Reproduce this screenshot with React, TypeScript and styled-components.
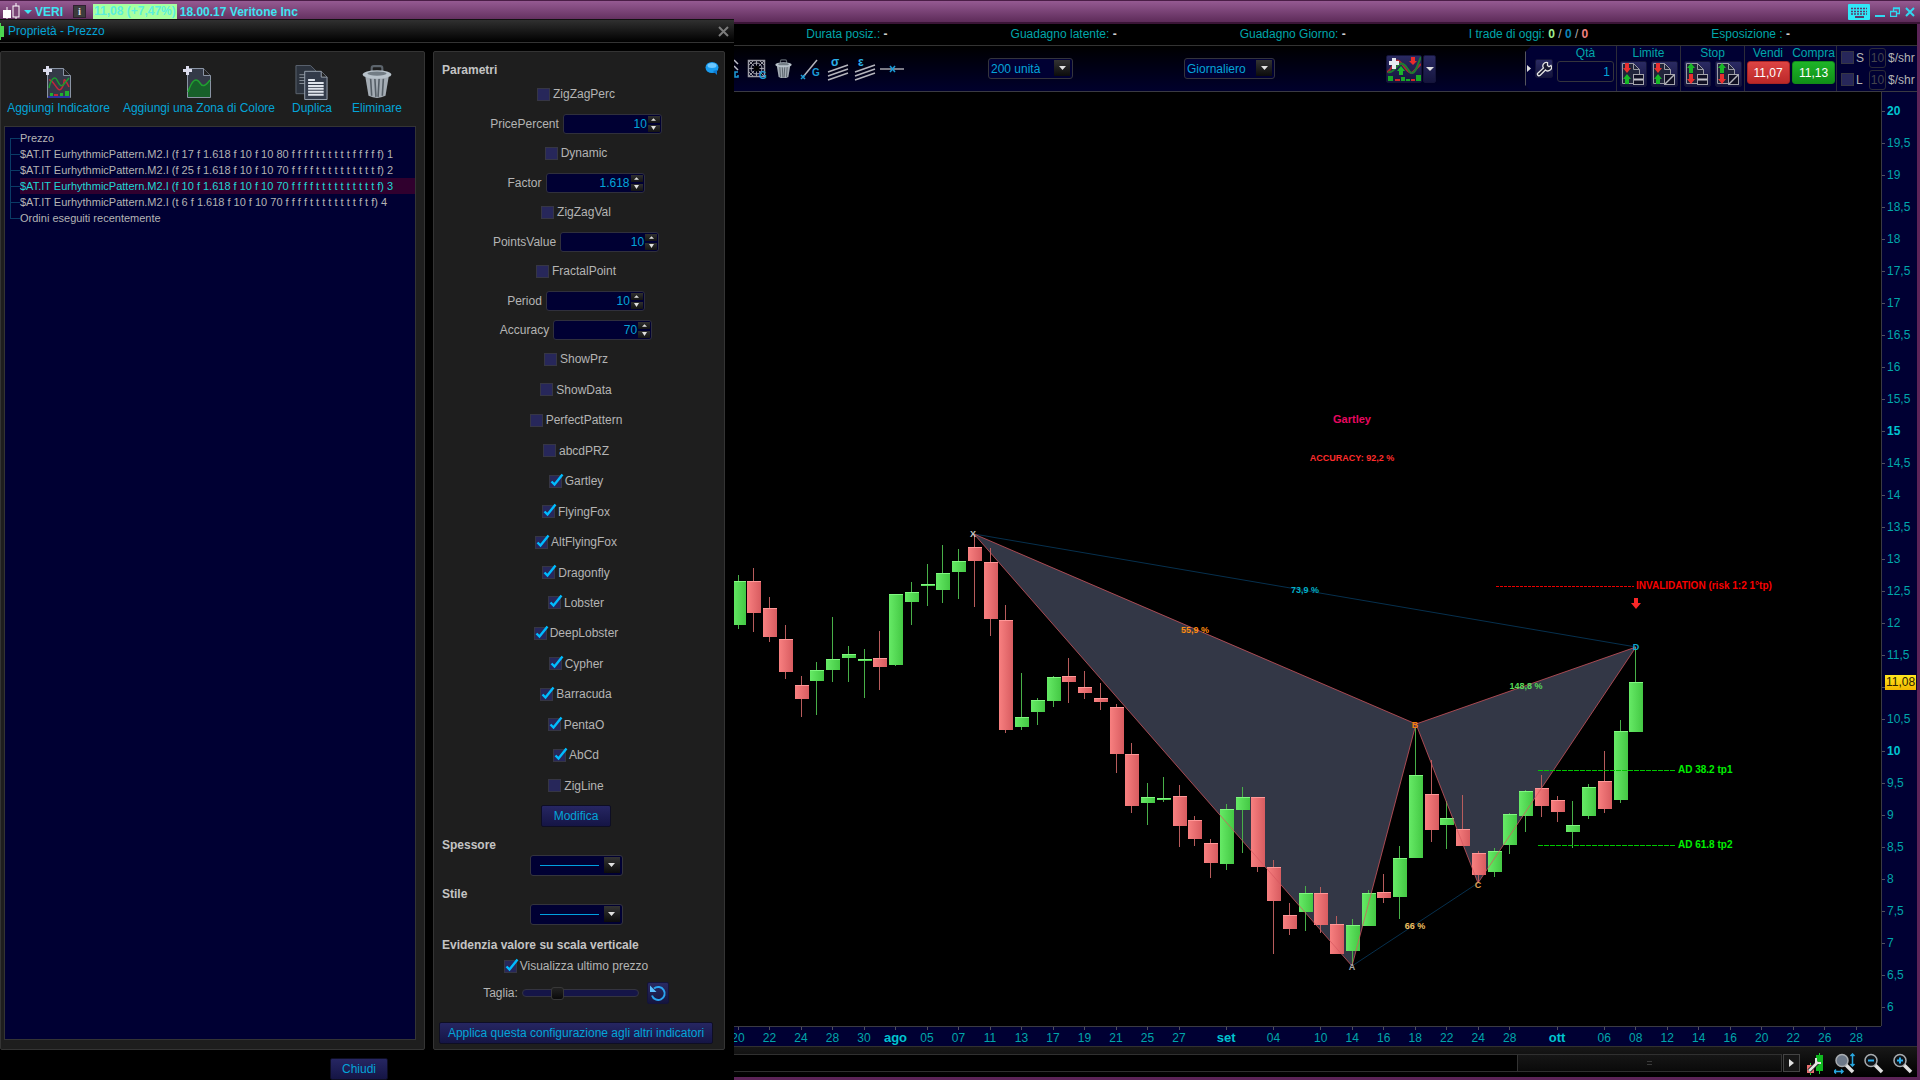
import React, { useId, useState } from "react";
import styled, { createGlobalStyle, css } from "styled-components";

const cyan = "#04a4d8";
const teal = "#00a6aa";
const navy = "#000033";
const grey = "#b4b4b4";

const GlobalStyle = createGlobalStyle`
  *, *::before, *::after { box-sizing: border-box; }
  html, body, #root { height: 100%; }
  body {
    margin: 0;
    background: #000;
    overflow: hidden;
    font-family: "Liberation Sans", Arial, sans-serif;
    font-size: 12px;
    line-height: 16px;
  }
  button, input, select { font: inherit; margin: 0; }
  h2, ul { margin: 0; padding: 0; }
  svg { display: block; }
`;

const Window = styled.div`
  position: relative;
  display: flex;
  flex-direction: column;
  height: 100vh;
  background: #000;
  border: solid #5c2458;
  border-width: 0 3px 3px 0;
`;

/* ---------- window title ---------- */

const TitleBar = styled.header`
  display: flex;
  align-items: center;
  flex: none;
  height: 24px;
  margin-right: -3px;
  padding: 0 5px 0 3px;
  border-top: 1px solid #4a1d46;
  border-bottom: 2px solid #3a1436;
  background: linear-gradient(#955a92, #5d2b59);
  color: #3fe4f2;
  font-weight: bold;
`;

const Ticker = styled.button`
  display: flex;
  align-items: center;
  gap: 3px;
  padding: 0;
  border: 0;
  background: none;
  color: inherit;
  font-weight: bold;
`;

const InfoButton = styled.button`
  width: 13px;
  height: 13px;
  margin: 0 7px 0 10px;
  padding: 0;
  border: 1px solid #302030;
  background: #3c3c3c;
  color: #ddd;
  font: bold 11px/11px "Liberation Serif", serif;
`;

const Change = styled.span`
  padding: 0 1px;
  margin-right: 3px;
  line-height: 15px;
  background: #a8ffa0;
  color: #5cf0dc;
`;

const WindowButtons = styled.div`
  display: flex;
  align-items: center;
  gap: 5px;
  margin-left: auto;
`;

const PlainButton = styled.button`
  display: flex;
  padding: 0;
  border: 0;
  background: none;
`;

/* ---------- trading workspace ---------- */

const Workspace = styled.main`
  display: flex;
  flex-direction: column;
  flex: 1;
  min-height: 0;
  margin-left: 734px;
`;

const Stats = styled.div`
  display: flex;
  align-items: center;
  justify-content: flex-end;
  gap: 123px;
  flex: none;
  height: 22px;
  padding: 0 127px 2px 0;
  border-bottom: 1px solid #333;
  color: ${teal};
  white-space: nowrap;
`;

const Value = styled.b<{ $color?: string }>`
  color: ${(p) => p.$color ?? "#d0d0d0"};
`;

const Slash = styled.span`
  color: #b0b0b0;
`;

const Toolbar = styled.div`
  display: flex;
  align-items: center;
  flex: none;
  height: 46px;
  border-bottom: 1px solid #3a3a42;
  background: linear-gradient(#000, #00002c);
`;

const ToolButton = styled.button<{ $cut?: boolean }>`
  display: flex;
  align-items: center;
  justify-content: center;
  width: ${(p) => (p.$cut ? 9 : 27)}px;
  height: 30px;
  padding: 0;
  border: 0;
  background: none;
  ${(p) => p.$cut && css`justify-content: flex-start;`}
`;

const SelectBox = styled.div<{ $width: number; $left?: number }>`
  position: relative;
  flex: none;
  width: ${(p) => p.$width}px;
  height: 21px;
  margin-left: ${(p) => p.$left ?? 0}px;
  border: 1px solid #34343c;
  border-radius: 3px;
  background: ${navy};
  select {
    display: block;
    appearance: none;
    width: 100%;
    height: 19px;
    padding: 0 18px 0 2px;
    border: 0;
    background: none;
    color: ${cyan};
  }
`;

const SelectArrow = styled.span`
  position: absolute;
  top: 1px;
  right: 2px;
  display: flex;
  align-items: center;
  justify-content: center;
  width: 16px;
  height: 16px;
  background: linear-gradient(#333, #0c0c0c);
  pointer-events: none;
`;

const SelectLine = styled.span`
  position: absolute;
  top: 9px;
  left: 9px;
  width: 59px;
  height: 1px;
  background: #00a0e0;
  pointer-events: none;
`;

const SplitButton = styled.div`
  display: flex;
  gap: 1px;
  margin-left: 111px;
`;

const Raised = styled.button<{ $w: number; $h: number }>`
  display: flex;
  align-items: center;
  justify-content: center;
  flex: none;
  width: ${(p) => p.$w}px;
  height: ${(p) => p.$h}px;
  padding: 0;
  border: 1px solid #14143a;
  border-radius: 2px;
  background: linear-gradient(#2a2a62, #15153e);
`;

const TradePanel = styled.div`
  display: flex;
  align-items: stretch;
  width: 392px;
  height: 45px;
  margin-left: auto;
  line-height: 14px;
  color: ${teal};
  background: ${navy};
  clip-path: polygon(6px 0, 100% 0, 100% 100%, 6px 100%, 0 39px, 0 6px);
`;

const TradeCell = styled.div<{ $w: number; $line?: boolean }>`
  display: flex;
  flex-direction: column;
  align-items: center;
  gap: 1px;
  flex: none;
  width: ${(p) => p.$w}px;
  border-right: ${(p) => (p.$line ? "1px solid #2c2c38" : "0")};
`;

const TradeSide = styled.div`
  display: flex;
  align-items: center;
  justify-content: space-between;
  width: 30px;
  padding: 0 2px 0 1px;
  border-left: 1px solid #55555c;
`;

const ButtonRow = styled.div`
  display: flex;
  gap: 4px;
`;

const QtyInput = styled.input`
  width: 57px;
  height: 21px;
  padding: 0 3px;
  border: 1px solid #34343c;
  border-radius: 3px;
  background: ${navy};
  color: ${cyan};
  text-align: right;
`;

const OrderButton = styled.button<{ $buy?: boolean }>`
  width: 43px;
  height: 23px;
  padding: 0;
  border: 1px solid ${(p) => (p.$buy ? "#128a18" : "#a82424")};
  border-radius: 3px;
  background: ${(p) =>
    p.$buy ? "linear-gradient(#1eb428, #109018)" : "linear-gradient(#dc4444, #bc2828)"};
  color: #fff;
`;

const Stops = styled.div`
  display: flex;
  flex-direction: column;
  justify-content: center;
  gap: 2px;
  padding-left: 4px;
`;

const StopLine = styled.label`
  display: grid;
  grid-template-columns: 13px 15px 17px auto;
  align-items: center;
  height: 20px;
  color: ${grey};
  white-space: nowrap;
  span { padding-left: 2px; }
`;

const StopInput = styled.input`
  width: 17px;
  height: 20px;
  padding: 0;
  border: 1px solid #2c2c38;
  border-radius: 3px;
  background: ${navy};
  color: #44444c;
  text-align: center;
`;

/* ---------- chart ---------- */

const ChartRow = styled.div`
  display: flex;
  flex: 1;
  min-height: 0;
`;

const ChartSvg = styled.svg`
  flex: 1;
  min-width: 0;
  height: 100%;
`;

const PriceAxis = styled.div`
  position: relative;
  display: flex;
  flex-direction: column;
  flex: none;
  width: 36px;
  padding: 3px 0;
  border-left: 1px solid #3a3a42;
  background: ${navy};
  color: ${teal};
`;

const PriceTick = styled.div<{ $major: boolean }>`
  display: flex;
  align-items: center;
  flex: 1;
  gap: 2px;
  font-weight: ${(p) => (p.$major ? "bold" : "normal")};
  color: ${(p) => (p.$major ? "#00c4d0" : teal)};
  &::before {
    content: "";
    width: 3px;
    height: 1px;
    background: #505060;
  }
`;

const LastPrice = styled.div`
  position: absolute;
  right: 1px;
  top: calc(63% - 5px);
  width: 31px;
  height: 15px;
  line-height: 15px;
  background: linear-gradient(#ffe620, #f2b800);
  color: #2a2200;
  text-align: center;
`;

const TimeAxis = styled.svg`
  flex: none;
  width: 100%;
  height: 20px;
  background: ${navy};
`;

const Footer = styled.div`
  display: flex;
  align-items: center;
  flex: none;
  height: 31px;
  padding-right: 4px;
  border-top: 1px solid #303030;
  background: linear-gradient(#181818, #000);
`;

const Track = styled.div`
  display: flex;
  justify-content: flex-end;
  flex: 1;
  height: 18px;
  margin-top: 2px;
  border: solid #303030;
  border-width: 1px 0;
  background: #000;
`;

const Thumb = styled.div`
  display: flex;
  align-items: center;
  justify-content: center;
  width: 265px;
  border: solid #333;
  border-width: 0 1px;
  background: linear-gradient(#161616, #0a0a0a);
`;

const Grip = styled.span`
  width: 5px;
  height: 4px;
  border: solid #3a3a3a;
  border-width: 1px 0;
`;

const NextButton = styled.button`
  display: flex;
  align-items: center;
  justify-content: center;
  width: 17px;
  height: 18px;
  margin: 2px 0 0 1px;
  padding: 0;
  border: 1px solid #444;
  background: #161616;
`;

const Zooms = styled.div`
  display: flex;
  gap: 8px;
  margin: 3px 0 0 6px;
`;

/* ---------- properties dialog ---------- */

const Dialog = styled.section`
  position: absolute;
  top: 19px;
  left: 0;
  bottom: -3px;
  display: flex;
  flex-direction: column;
  width: 734px;
  background: #000;
  color: ${grey};
`;

const DialogTitle = styled.div`
  display: flex;
  align-items: center;
  flex: none;
  height: 24px;
  padding-right: 5px;
  border-top: 1px solid #111;
  border-bottom: 1px solid #333;
  background: linear-gradient(#303030, #000);
  color: ${cyan};
  h2 { flex: 1; padding-left: 4px; font-size: 12px; font-weight: normal; }
`;

const Panels = styled.div`
  display: flex;
  gap: 8px;
  flex: 1;
  min-height: 0;
  margin-top: 8px;
`;

const Panel = styled.div<{ $width: number }>`
  display: flex;
  flex-direction: column;
  width: ${(p) => p.$width}px;
  border: 1px solid #343434;
  border-radius: 2px;
  background: #1e1e1e;
`;

const Actions = styled.div`
  display: flex;
  height: 74px;
  flex: none;
`;

const Action = styled.button<{ $w: number }>`
  display: flex;
  flex-direction: column;
  align-items: center;
  justify-content: space-between;
  position: relative;
  width: ${(p) => p.$w}px;
  height: 51px;
  margin-top: 13px;
  padding: 0;
  border: 0;
  background: none;
  color: ${cyan};
  white-space: nowrap;
  & + &::before {
    content: "";
    position: absolute;
    left: 0;
    top: 1px;
    width: 2px;
    height: 34px;
    border-left: 1px solid #0c0c0c;
    background: #303030;
  }
`;

const Tree = styled.ul`
  flex: 1;
  margin: 0 8px 9px 3px;
  padding: 3px 0 0 5px;
  border: 1px solid #343434;
  background: ${navy};
  list-style: none;
  overflow: hidden;
`;

const TreeItem = styled.li<{ $selected: boolean }>`
  display: flex;
  height: 16px;
  font-size: 11px;
  white-space: nowrap;
  color: ${(p) => (p.$selected ? "#1fd6d6" : grey)};
  &::before {
    content: "";
    width: 10px;
    height: 16px;
    background:
      linear-gradient(#0a3c66, #0a3c66) 0 8px / 10px 1px no-repeat,
      linear-gradient(#0a3c66, #0a3c66) 0 0 / 1px 16px no-repeat;
  }
  &:first-child::before { background-position: 0 8px, 0 8px; }
  &:last-child::before { background-size: 10px 1px, 1px 8px; }
  span {
    flex: 1;
    background: ${(p) => (p.$selected ? "#30002e" : "none")};
  }
`;

const ParamHead = styled.div`
  display: flex;
  justify-content: space-between;
  height: 27px;
  flex: none;
  padding: 10px 5px 0 0;
`;

const Heading = styled.h2<{ $top?: number }>`
  flex: none;
  margin-top: ${(p) => p.$top ?? 0}px;
  padding-left: 8px;
  font-size: 12px;
  line-height: 16px;
  font-weight: bold;
  color: #c4c4c4;
`;

const Row = styled.div<{ $h?: number; $top?: number }>`
  display: flex;
  align-items: center;
  justify-content: center;
  gap: 4px;
  flex: ${(p) => (p.$h ? "none" : "1")};
  height: ${(p) => (p.$h ? `${p.$h}px` : "auto")};
  margin-top: ${(p) => p.$top ?? 0}px;
  padding-right: 6px;
`;

const CheckList = styled.div`
  display: flex;
  flex-direction: column;
  flex: 1;
  min-height: 0;
`;

const CheckLabel = styled.label`
  display: flex;
  align-items: center;
  gap: 3px;
`;

const CheckBox = styled.span`
  position: relative;
  display: block;
  width: 13px;
  height: 13px;
  svg { position: absolute; top: -2px; left: 1px; pointer-events: none; }
  input:not(:checked) + svg { display: none; }
`;

const CheckInput = styled.input`
  display: block;
  appearance: none;
  width: 13px;
  height: 13px;
  border: 1px solid #363644;
  background: #27275a;
`;

const SpinBox = styled.div`
  display: flex;
  align-items: center;
  width: 99px;
  height: 20px;
  border: 1px solid #30303c;
  border-radius: 3px;
  background: ${navy};
  input {
    flex: 1;
    min-width: 0;
    padding: 0 1px 0 4px;
    border: 0;
    background: none;
    color: ${cyan};
    text-align: right;
  }
`;

const Spinners = styled.div`
  display: grid;
  gap: 2px;
  margin-right: 1px;
`;

const SpinButton = styled.button`
  display: flex;
  align-items: center;
  justify-content: center;
  width: 12px;
  height: 7px;
  padding: 0;
  border: 0;
  background: linear-gradient(#303030, #141414);
`;

const TextButton = styled.button<{ $w: number }>`
  flex: none;
  width: ${(p) => p.$w}px;
  height: 22px;
  padding: 0;
  border: 1px solid #0e0e24;
  border-radius: 2px;
  background: linear-gradient(#262662, #151545);
  color: ${cyan};
  white-space: nowrap;
`;

const Range = styled.input`
  appearance: none;
  width: 117px;
  height: 14px;
  background: none;
  &::-webkit-slider-runnable-track {
    height: 8px;
    border: 1px solid #343440;
    border-radius: 4px;
    background: #151548;
  }
  &::-webkit-slider-thumb {
    appearance: none;
    width: 13px;
    height: 13px;
    margin-top: -3px;
    border: 1px solid #383838;
    border-radius: 3px;
    background: linear-gradient(#222, #0a0a0a);
  }
`;

const Apply = styled.div`
  padding: 18px 0 5px 5px;
`;

const DialogFooter = styled.div`
  display: flex;
  justify-content: center;
  flex: none;
  height: 30px;
  padding: 8px 16px 0 0;
`;

/* ---------- icons ---------- */

const Down = ({ size = 7, color = "#e0e0e0" }: { size?: number; color?: string }) => (
  <svg width={size} height={4} viewBox="0 0 8 4" preserveAspectRatio="none">
    <path d="M0 0h8L4 4z" fill={color} />
  </svg>
);

const Up = () => (
  <svg width="5" height="3" viewBox="0 0 8 4">
    <path d="M0 4h8L4 0z" fill="#e0e0e0" />
  </svg>
);

const CandlesIcon = () => (
  <svg width="18" height="17" viewBox="0 0 18 17">
    <path d="M4 4v12M13 0v17" stroke="#fff" />
    <rect x="0" y="7" width="8" height="8" fill="#fff" />
    <rect x="10" y="3" width="6" height="11" fill="#7a4676" stroke="#fff" />
  </svg>
);

const PageBase = ({ children }: { children: React.ReactNode }) => (
  <svg width="34" height="34" viewBox="0 0 34 34">
    <path d="M5.500 3.500h16l7 7v22h-23z" fill="#343a48" stroke="#8a94a4" />
    <path d="M21.500 3.500v7h7" fill="#222" stroke="#8a94a4" />
    {children}
    <path d="M4 1h3v3h3v3H7v3H4V7H1V4h3z" fill="#dcdcec" />
  </svg>
);

const AddIndicatorIcon = () => (
  <PageBase>
    <path d="M7 15c3-1 6 6 9 9s6-4 6-8 3 2 5 6" fill="none" stroke="#c22838" strokeWidth="1.500" />
    <path d="M7 23c2-10 6-12 8-8s4 8 7 4l5-6" fill="none" stroke="#1c9c30" strokeWidth="1.500" />
    <path d="M8 28h3v3H8zM18 28h3v3h-3zM23 26h4v5h-4z" fill="#20b030" />
    <path d="M12 29h4v2h-4z" fill="#c22838" />
    <path d="M6 32h22" stroke="#2c34a0" strokeWidth="2" />
  </PageBase>
);

const AddZoneIcon = () => (
  <PageBase>
    <path d="M6 27c4-12 8-15 12-9 3 5 6 2 10-3v17H6z" fill="#17602a" />
    <path d="M6 27c4-12 8-15 12-9 3 5 6 2 10-3" fill="none" stroke="#20a030" strokeWidth="1.500" />
  </PageBase>
);

const DuplicateIcon = () => (
  <svg width="34" height="36" viewBox="0 0 34 36">
    <path d="M.5.500h15l6 6v23h-21z" fill="#2c333e" stroke="#5c6470" />
    <path d="M4 10h6M4 13h6M4 16h6M4 19h6" stroke="#8a929c" />
    <path d="M9.500 6.500h17l6 6v23h-23z" fill="#333b4a" stroke="#98a2b0" />
    <path d="M26.500 6.500v6h6" fill="#222" stroke="#98a2b0" />
    <path d="M13 15.500h7M13 18.500h16M13 21.500h16M13 24.500h16M13 27.500h16M13 30.500h16" stroke="#dfe4ec" strokeWidth="2" />
  </svg>
);

const TrashIcon = ({ width, height }: { width: number; height: number }) => (
  <svg width={width} height={height} viewBox="0 0 28 32">
    <path d="M9 7V3q0-2 2-2h6q2 0 2 2v4" fill="none" stroke="#5c646c" strokeWidth="2" />
    <path d="M3 11h22l-3 18q-8 4-16 0z" fill="#a4acb4" />
    <path d="M8 13l1 16M12 13l1 17M16 13l-1 17M20 13l-1 16" stroke="#555e66" strokeWidth="1.500" />
    <ellipse cx="14" cy="9" rx="13.500" ry="4" fill="#b8c2ca" />
    <ellipse cx="14" cy="8" rx="9" ry="2" fill="#727c84" />
  </svg>
);

const CheckMark = () => (
  <svg width="14" height="14" viewBox="0 0 14 14">
    <path d="M1.500 8.500L4.500 11.500L12.500 1.500" fill="none" stroke="#00bcff" strokeWidth="2.400" />
  </svg>
);

const BubbleIcon = () => (
  <svg width="14" height="13" viewBox="0 0 14 13">
    <ellipse cx="7" cy="5.500" rx="6.500" ry="5.500" fill="#189cf0" />
    <path d="M8 9l4 4V8z" fill="#0c78d0" />
    <ellipse cx="7" cy="3.500" rx="4.500" ry="2.500" fill="#6cc8ff" />
  </svg>
);

const ResetIcon = () => (
  <svg width="18" height="18" viewBox="0 0 18 18">
    <path d="M5 4.500A6.500 6.500 0 1 1 3 11.500" fill="none" stroke="#2aa4f0" strokeWidth="2" />
    <path d="M1 1.500v6.500h6.500z" fill="#5cc0ff" />
  </svg>
);

const GannIcon = () => (
  <svg width="20" height="22" viewBox="0 0 20 22">
    <rect x="1.500" y="2.500" width="16" height="16" fill="none" stroke="#9a9aa4" strokeWidth="1.500" />
    <path d="M2 3l15 15M17 3L2 18M9.500 3v15M2 10.500h15M2 7l4-4M13 3l4 4M2 14l4 4" stroke="#9a9aa4" />
    <circle cx="9.500" cy="10.500" r="5.500" fill="none" stroke="#b4b4bc" />
    <circle cx="9.500" cy="10.500" r="3" fill="#000" />
    <text x="12" y="21" fontSize="10" fontWeight="bold" fill="#1c9cd8">G</text>
  </svg>
);

const CutIcon = () => (
  <svg width="5" height="20" viewBox="0 0 5 20">
    <path d="M0 1l4 4M0 7l4 4" stroke="#c0c0c8" strokeWidth="1.500" />
    <path d="M4 13H1v5h3v-2" stroke="#1c9cd8" strokeWidth="1.500" fill="none" />
  </svg>
);

const SegmentIcon = () => (
  <svg width="22" height="22" viewBox="0 0 22 22">
    <path d="M3 19L17 2" stroke="#b4b4bc" strokeWidth="1.500" />
    <path d="M1 17l4 4M5 17l-4 4" stroke="#1c9cd8" strokeWidth="1.500" />
    <text x="12" y="18" fontSize="10" fontWeight="bold" fill="#1c9cd8">G</text>
  </svg>
);

const BandsIcon = ({ glyph }: { glyph: string }) => (
  <svg width="22" height="28" viewBox="0 0 22 28">
    <path d="M1 17l20-7M1 21l20-7M1 25l20-7" stroke="#b4b4bc" strokeWidth="1.500" />
    <text x="4" y="11" fontSize="12" fontWeight="bold" fill="#2cb0e8">{glyph}</text>
  </svg>
);

const HLineIcon = () => (
  <svg width="24" height="8" viewBox="0 0 24 8">
    <path d="M0 4h24" stroke="#a4a4ac" strokeWidth="1.500" />
    <path d="M10 1l5 6M15 1l-5 6" stroke="#1c9cd8" strokeWidth="1.500" />
  </svg>
);

const IndicatorsIcon = () => (
  <svg width="34" height="26" viewBox="0 0 34 26">
    <path d="M0 16c6-2 7-14 12-11s7 12 13 12l9-9" fill="none" stroke="#b02430" strokeWidth="2" />
    <path d="M1 16c7 2 9-11 15-8s5 9 9 9 6-10 9-16" fill="none" stroke="#1c7c30" strokeWidth="2" />
    <path d="M14 10l-4 5h2v4h4v-4h2z" fill="#1cb42c" />
    <path d="M24 1h4v4h2l-4 4-4-4h2z" fill="#e82c2c" />
    <path d="M1 20h5v5H1zM14 21h4v4h-4zM19 23h4v2h-4zM29 19h5v6h-5z" fill="#18a828" />
    <path d="M8 23h5v2H8zM24 23h4v2h-4z" fill="#d02828" />
    <path d="M5 2h4v3h3v4H9v4H5V9H2V5h3z" fill="#e8e8f0" />
  </svg>
);

const WrenchIcon = () => (
  <svg width="16" height="16" viewBox="0 0 16 16">
    <path
      d="M1.500 12.500l6-5.500a3.600 3.600 0 0 1 4-5.500v3l1.500 1.200 2-1.200a3.600 3.600 0 0 1-5.500 4.500l-5.500 5.500a1.700 1.700 0 0 1-2.500-2z"
      fill="#181830"
      stroke="#e4e4e4"
      strokeWidth="1.300"
    />
  </svg>
);

const OrderIcon = ({ stop, slash }: { stop?: boolean; slash?: boolean }) => {
  const top = stop ? "#18b828" : "#e83030";
  const bottom = stop ? "#e83030" : "#18b828";
  return (
    <svg width="24" height="24" viewBox="0 0 24 24">
      <path d="M1.500 1.500h11l6 6v14h-17z" fill="#20243a" stroke="#9a9aa4" />
      <path d="M12.500 1.500v6h6" fill="none" stroke="#9a9aa4" />
      <path
        d={stop ? "M6 1L2 6h2v5h4V6h2z" : "M4 1h4v5h2l-4 5-4-5h2z"}
        fill={top}
      />
      <path
        d={stop ? "M4 12h4v5h2l-4 5-4-5h2z" : "M6 12l-4 5h2v5h4v-5h2z"}
        fill={bottom}
      />
      <rect x="12.500" y="12.500" width="10" height="10" fill="#101024" stroke="#a4a4ac" />
      {slash ? (
        <path d="M13 22l9-9" stroke="#b4b4bc" strokeWidth="1.500" />
      ) : (
        <path d="M13 17.500h9" stroke="#c4c4cc" strokeWidth="2" />
      )}
    </svg>
  );
};

const Lens = ({ children, fill = "#101418" }: { children?: React.ReactNode; fill?: string }) => (
  <svg width="21" height="21" viewBox="0 0 21 21">
    <path d="M12 12l7 7" stroke="#e0e0e0" strokeWidth="3.500" />
    <circle cx="8" cy="7.500" r="6" fill={fill} stroke="#a8acb0" strokeWidth="1.500" />
    {children}
  </svg>
);

const ChartToolIcon = () => (
  <svg width="20" height="22" viewBox="0 0 20 22">
    <path d="M13.500 0v21M4.500 10v12" stroke="#20d030" />
    <rect x="10" y="2" width="7" height="16" fill="#10b820" />
    <rect x="1" y="12" width="7" height="8" fill="#e87070" />
    <path d="M3 18L12 9" stroke="#222" strokeWidth="4.500" />
    <path d="M3 18L12 9" stroke="#e4e4e4" strokeWidth="2.500" />
    <path d="M10 5v5h5" fill="none" stroke="#e4e4e4" strokeWidth="2" />
  </svg>
);

/* ---------- chart data ---------- */

const STEP = 15.75;
const FIRST = 738;
const candleX = (i: number) => FIRST + i * STEP;

/* direction, high, body top, body bottom, low */
const candles: [string, number, number, number, number][] = [
  ["u", 575, 581, 625, 629], ["d", 568, 581, 613, 632], ["d", 597, 608, 637, 642], ["d", 625, 639, 672, 679],
  ["d", 676, 685, 699, 717], ["u", 662, 670, 681, 715], ["u", 617, 659, 670, 682], ["u", 646, 654, 658, 682],
  ["u", 649, 659, 661, 698], ["d", 631, 658, 667, 690], ["u", 594, 594, 665, 666], ["u", 582, 592, 602, 625],
  ["u", 564, 584, 586, 606], ["u", 545, 573, 590, 603], ["u", 549, 561, 572, 599], ["d", 534, 547, 561, 607],
  ["d", 548, 562, 619, 636], ["d", 605, 620, 730, 733], ["u", 673, 717, 727, 730], ["u", 698, 700, 712, 725],
  ["u", 676, 677, 701, 707], ["d", 658, 676, 682, 703], ["d", 671, 687, 693, 699], ["d", 683, 698, 702, 710],
  ["d", 704, 707, 754, 773], ["d", 743, 754, 806, 813], ["u", 783, 797, 803, 825], ["u", 777, 798, 800, 802],
  ["d", 785, 796, 826, 847], ["d", 816, 820, 839, 846], ["d", 839, 843, 863, 878], ["u", 804, 809, 864, 870],
  ["u", 787, 797, 810, 853], ["d", 797, 797, 867, 872], ["d", 860, 867, 901, 954], ["d", 903, 915, 929, 935],
  ["u", 886, 893, 912, 931], ["d", 887, 893, 925, 933], ["d", 916, 924, 954, 954], ["u", 919, 925, 951, 966],
  ["u", 890, 893, 926, 926], ["d", 874, 892, 898, 903], ["u", 846, 858, 897, 919], ["u", 727, 775, 858, 858],
  ["d", 760, 794, 830, 842], ["u", 801, 818, 825, 849], ["d", 795, 829, 846, 846], ["d", 851, 853, 875, 883],
  ["u", 848, 851, 872, 877], ["u", 813, 814, 845, 854], ["u", 790, 791, 816, 832], ["d", 775, 788, 806, 817],
  ["d", 796, 800, 812, 822], ["u", 801, 825, 832, 848], ["u", 784, 787, 816, 819], ["d", 751, 781, 809, 813],
  ["u", 720, 731, 800, 803], ["u", 647, 682, 732, 732],
];

const dates: [number, string][] = [
  [0, "20"], [2, "22"], [4, "24"], [6, "28"], [8, "30"], [10, "ago"], [12, "05"], [14, "07"], [16, "11"],
  [18, "13"], [20, "17"], [22, "19"], [24, "21"], [26, "25"], [28, "27"], [31, "set"], [34, "04"],
  [37, "10"], [39, "14"], [41, "16"], [43, "18"], [45, "22"], [47, "24"], [49, "28"], [52, "ott"],
  [55, "06"], [57, "08"], [59, "12"], [61, "14"], [63, "16"], [65, "20"], [67, "22"], [69, "26"], [71, "28"],
];

const prices = Array.from({ length: 29 }, (_, i) => 20 - i / 2);

const points = { X: [974, 534], A: [1352, 966], B: [1416, 724], C: [1478, 883], D: [1636, 647] };
const at = (k: keyof typeof points) => points[k].join(" ");

const notes: { x: number; y: number; text: string; color: string; size: number; start?: boolean }[] = [
  { x: 1352, y: 423, text: "Gartley", color: "#e80860", size: 11 },
  { x: 1352, y: 461, text: "ACCURACY: 92,2 %", color: "#ff2c2c", size: 9 },
  { x: 1305, y: 593, text: "73,9 %", color: "#00b0c8", size: 9 },
  { x: 1195, y: 633, text: "55,9 %", color: "#ff8c10", size: 9 },
  { x: 1526, y: 689, text: "148,8 %", color: "#58d858", size: 9 },
  { x: 1415, y: 929, text: "66 %", color: "#f0c060", size: 9 },
  { x: 1636, y: 589, text: "INVALIDATION (risk 1:2 1°tp)", color: "#f80000", size: 10, start: true },
  { x: 1678, y: 773, text: "AD 38.2 tp1", color: "#00f000", size: 10, start: true },
  { x: 1678, y: 848, text: "AD 61.8 tp2", color: "#00f000", size: 10, start: true },
  { x: 973, y: 537, text: "X", color: "#c8c8c8", size: 9 },
  { x: 1352, y: 970, text: "A", color: "#a8a8a8", size: 9 },
  { x: 1415, y: 728, text: "B", color: "#f08010", size: 9 },
  { x: 1478, y: 888, text: "C", color: "#e0a050", size: 9 },
  { x: 1636, y: 650, text: "D", color: "#10a8d0", size: 9 },
];

const Chart = () => (
  <ChartSvg viewBox="734 92 1147 934" role="img" aria-label="VERI">
    <defs>
      <linearGradient id="up">
        <stop offset="0" stopColor="#66ea66" />
        <stop offset="1" stopColor="#44c844" />
      </linearGradient>
      <linearGradient id="down">
        <stop offset="0" stopColor="#f88080" />
        <stop offset="1" stopColor="#d85c60" />
      </linearGradient>
    </defs>
    <path d={`M${at("X")}L${at("D")}M${at("A")}L${at("C")}`} stroke="#06304e" />
    <path d={`M${at("X")}L${at("B")}L${at("A")}zM${at("B")}L${at("D")}L${at("C")}z`} fill="#333746" />
    {candles.map(([dir, high, top, bottom, low], i) => {
      const x = Math.floor(candleX(i));
      const up = dir === "u";
      return (
        <g key={i}>
          <path d={`M${x + 0.5} ${high}V${low}`} stroke={up ? "#48b048" : "#b85c5c"} />
          <rect x={x - 6} y={top} width={14} height={Math.max(bottom - top, 2)} fill={up ? "url(#up)" : "url(#down)"} />
          <path d={`M${x - 6} ${top + 0.5}h14`} stroke={up ? "#80f880" : "#ff9898"} />
        </g>
      );
    })}
    <path
      d={`M${at("X")}L${at("B")}L${at("A")}zM${at("B")}L${at("D")}L${at("C")}z`}
      fill="none"
      stroke="#d85862"
      strokeOpacity="0.75"
    />
    <path d="M1496 586.500H1634" stroke="#e80000" strokeDasharray="3 1" />
    <path d="M1538 770.500H1675M1538 845.500H1675" stroke="#00c800" strokeDasharray="5 1" />
    <path d="M1634 598h4v5h3l-5 6-5-6h3z" fill="#f82828" />
    {notes.map((n) => (
      <text
        key={n.text}
        x={n.x}
        y={n.y}
        fill={n.color}
        fontSize={n.size}
        fontWeight="bold"
        textAnchor={n.start ? "start" : "middle"}
      >
        {n.text}
      </text>
    ))}
  </ChartSvg>
);

/* ---------- dialog parts ---------- */

const Check = ({ label, on = false }: { label?: string; on?: boolean }) => {
  const [checked, setChecked] = useState(on);
  return (
    <CheckLabel>
      <CheckBox>
        <CheckInput type="checkbox" checked={checked} onChange={() => setChecked(!checked)} />
        <CheckMark />
      </CheckBox>
      {label}
    </CheckLabel>
  );
};

const Spin = ({ label, start }: { label: string; start: string }) => {
  const id = useId();
  const [value, setValue] = useState(start);
  const bump = (by: number) => setValue(String(Number(value) + by));
  return (
    <Row $h={29}>
      <label htmlFor={id}>{label}</label>
      <SpinBox>
        <input id={id} inputMode="decimal" value={value} onChange={(e) => setValue(e.target.value)} />
        <Spinners>
          <SpinButton aria-label="+" onClick={() => bump(1)}><Up /></SpinButton>
          <SpinButton aria-label="-" onClick={() => bump(-1)}><Down size={5} /></SpinButton>
        </Spinners>
      </SpinBox>
    </Row>
  );
};

const Dropdown = ({ label, text, width, left }: { label: string; text?: string; width: number; left?: number }) => (
  <SelectBox $width={width} $left={left}>
    <select aria-label={label}><option>{text}</option></select>
    {!text && <SelectLine />}
    <SelectArrow><Down /></SelectArrow>
  </SelectBox>
);

const indicators = [
  "Prezzo",
  "$AT.IT EurhythmicPattern.M2.I (f 17 f 1.618 f 10 f 10 80 f f f f t t t t t t f f f f f) 1",
  "$AT.IT EurhythmicPattern.M2.I (f 25 f 1.618 f 10 f 10 70 f f f f t t t t t t t t t t f) 2",
  "$AT.IT EurhythmicPattern.M2.I (f 10 f 1.618 f 10 f 10 70 f f f f t t t t t t t t t t f) 3",
  "$AT.IT EurhythmicPattern.M2.I (t 6 f 1.618 f 10 f 10 70 f f f f t t t t t t t t f t f) 4",
  "Ordini eseguiti recentemente",
];

const flags: [string, boolean][] = [
  ["ShowPrz", false], ["ShowData", false], ["PerfectPattern", false], ["abcdPRZ", false],
  ["Gartley", true], ["FlyingFox", true], ["AltFlyingFox", true], ["Dragonfly", true], ["Lobster", true],
  ["DeepLobster", true], ["Cypher", true], ["Barracuda", true], ["PentaO", true], ["AbCd", true],
  ["ZigLine", false],
];

const PropertiesDialog = () => {
  const sizeId = useId();
  return (
    <Dialog role="dialog" aria-label="Proprietà - Prezzo">
      <DialogTitle>
        <svg width="4" height="17" viewBox="0 0 4 17">
          <path d="M0 0h1v3h3v11H1v3H0z" fill="#4cd850" />
        </svg>
        <h2>Proprietà - Prezzo</h2>
        <PlainButton aria-label="Chiudi">
          <svg width="11" height="11" viewBox="0 0 11 11">
            <path d="M1 1l9 9M10 1l-9 9" stroke="#7c7c7c" strokeWidth="2" />
          </svg>
        </PlainButton>
      </DialogTitle>
      <Panels>
        <Panel $width={425}>
          <Actions>
            <Action $w={115}><AddIndicatorIcon />Aggiungi Indicatore</Action>
            <Action $w={166}><AddZoneIcon />Aggiungi una Zona di Colore</Action>
            <Action $w={60}><DuplicateIcon />Duplica</Action>
            <Action $w={70}><TrashIcon width={30} height={34} />Eliminare</Action>
          </Actions>
          <Tree>
            {indicators.map((name, i) => (
              <TreeItem key={name} $selected={i === 3}><span>{name}</span></TreeItem>
            ))}
          </Tree>
        </Panel>
        <Panel $width={292}>
          <ParamHead>
            <Heading>Parametri</Heading>
            <PlainButton aria-label="Aiuto"><BubbleIcon /></PlainButton>
          </ParamHead>
          <Row $h={30}><Check label="ZigZagPerc" /></Row>
          <Spin label="PricePercent" start="10" />
          <Row $h={30}><Check label="Dynamic" /></Row>
          <Spin label="Factor" start="1.618" />
          <Row $h={30}><Check label="ZigZagVal" /></Row>
          <Spin label="PointsValue" start="10" />
          <Row $h={30}><Check label="FractalPoint" /></Row>
          <Spin label="Period" start="10" />
          <Spin label="Accuracy" start="70" />
          <CheckList>
            {flags.map(([label, on]) => (
              <Row key={label}><Check label={label} on={on} /></Row>
            ))}
          </CheckList>
          <Row $h={22} $top={4}><TextButton $w={70}>Modifica</TextButton></Row>
          <Heading $top={10}>Spessore</Heading>
          <Row $h={21} $top={2}><Dropdown label="Spessore" width={93} /></Row>
          <Heading $top={10}>Stile</Heading>
          <Row $h={21} $top={2}><Dropdown label="Stile" width={93} /></Row>
          <Heading $top={12}>Evidenzia valore su scala verticale</Heading>
          <Row $h={16} $top={5}><Check label="Visualizza ultimo prezzo" on /></Row>
          <Row $h={23} $top={7}>
            <label htmlFor={sizeId}>Taglia:</label>
            <Range id={sizeId} type="range" min="0" max="100" defaultValue="28" />
            <span />
            <Raised $w={22} $h={22} aria-label="Reset"><ResetIcon /></Raised>
          </Row>
          <Apply><TextButton $w={274}>Applica questa configurazione agli altri indicatori</TextButton></Apply>
        </Panel>
      </Panels>
      <DialogFooter><TextButton $w={58}>Chiudi</TextButton></DialogFooter>
    </Dialog>
  );
};

const StopRow = ({ name }: { name: string }) => (
  <StopLine>
    <CheckInput type="checkbox" aria-label={name} />
    <span>{name}</span>
    <StopInput aria-label={`${name} $/shr`} defaultValue="10" />
    <span>$/shr</span>
  </StopLine>
);

export default function App() {
  return (
    <Window>
      <GlobalStyle />
      <TitleBar>
        <Ticker>
          <CandlesIcon />
          <Down size={8} color="#3fe4f2" />
          VERI
        </Ticker>
        <InfoButton>i</InfoButton>
        <Change>11,08 (+7,47%)</Change>
        18.00.17 Veritone Inc
        <WindowButtons>
          <PlainButton aria-label="Tastiera">
            <svg width="22" height="16" viewBox="0 0 22 16">
              <rect width="22" height="16" rx="1" fill="#30e8f8" />
              <path d="M3 4.500h16M3 7.500h16M3 10h16" stroke="#5a3a6a" strokeWidth="1.500" strokeDasharray="2 1" />
              <path d="M7 13h9" stroke="#5a3a6a" strokeWidth="2" />
            </svg>
          </PlainButton>
          <PlainButton aria-label="Riduci">
            <svg width="10" height="12" viewBox="0 0 10 12"><path d="M0 10h10" stroke="#30d8f0" strokeWidth="2" /></svg>
          </PlainButton>
          <PlainButton aria-label="Ripristina">
            <svg width="10" height="10" viewBox="0 0 10 10">
              <path d="M3.500 4V1.500h6v5H7M3 1h7M.5 4.500h6v5h-6z" fill="none" stroke="#30d8f0" strokeWidth="1.300" />
            </svg>
          </PlainButton>
          <PlainButton aria-label="Chiudi">
            <svg width="10" height="10" viewBox="0 0 10 10"><path d="M1 1l8 8M9 1L1 9" stroke="#30d8f0" strokeWidth="2" /></svg>
          </PlainButton>
        </WindowButtons>
      </TitleBar>

      <Workspace>
        <Stats>
          <span>Durata posiz.: <Value>-</Value></span>
          <span>Guadagno latente: <Value>-</Value></span>
          <span>Guadagno Giorno: <Value>-</Value></span>
          <span>
            I trade di oggi: <Value $color="#a0f090">0</Value> <Slash>/</Slash> <Value $color="#0c84b8">0</Value>{" "}
            <Slash>/</Slash> <Value $color="#f08080">0</Value>
          </span>
          <span>Esposizione : <Value>-</Value></span>
        </Stats>

        <Toolbar>
          <ToolButton $cut aria-label="Ventaglio"><CutIcon /></ToolButton>
          <ToolButton aria-label="Gann"><GannIcon /></ToolButton>
          <ToolButton aria-label="Elimina"><TrashIcon width={17} height={20} /></ToolButton>
          <ToolButton aria-label="Linea"><SegmentIcon /></ToolButton>
          <ToolButton aria-label="Sigma"><BandsIcon glyph="σ" /></ToolButton>
          <ToolButton aria-label="Epsilon"><BandsIcon glyph="ε" /></ToolButton>
          <ToolButton aria-label="Orizzontale"><HLineIcon /></ToolButton>
          <Dropdown label="Unità" text="200 unità" width={85} left={83} />
          <Dropdown label="Periodo" text="Giornaliero" width={91} left={111} />
          <SplitButton>
            <Raised $w={36} $h={28} aria-label="Indicatori"><IndicatorsIcon /></Raised>
            <Raised $w={13} $h={28} aria-label="Altro"><Down size={8} /></Raised>
          </SplitButton>
          <TradePanel>
            <TradeSide>
              <svg width="4" height="7" viewBox="0 0 4 7"><path d="M0 0l4 3.500L0 7z" fill="#e0e0e0" /></svg>
              <Raised $w={18} $h={19} aria-label="Opzioni"><WrenchIcon /></Raised>
            </TradeSide>
            <TradeCell $w={62} $line>
              <label htmlFor="qty">Qtà</label>
              <QtyInput id="qty" defaultValue="1" />
            </TradeCell>
            <TradeCell $w={64} $line>
              Limite
              <ButtonRow>
                <Raised $w={27} $h={26} aria-label="Limite semplice"><OrderIcon /></Raised>
                <Raised $w={27} $h={26} aria-label="Limite obliquo"><OrderIcon slash /></Raised>
              </ButtonRow>
            </TradeCell>
            <TradeCell $w={64} $line>
              Stop
              <ButtonRow>
                <Raised $w={27} $h={26} aria-label="Stop semplice"><OrderIcon stop /></Raised>
                <Raised $w={27} $h={26} aria-label="Stop obliquo"><OrderIcon stop slash /></Raised>
              </ButtonRow>
            </TradeCell>
            <TradeCell $w={46}>Vendi<OrderButton>11,07</OrderButton></TradeCell>
            <TradeCell $w={46} $line>Compra<OrderButton $buy>11,13</OrderButton></TradeCell>
            <Stops>
              <StopRow name="S" />
              <StopRow name="L" />
            </Stops>
          </TradePanel>
        </Toolbar>

        <ChartRow>
          <Chart />
          <PriceAxis>
            {prices.map((p) => (
              <PriceTick key={p} $major={p % 5 === 0}>{p === 11 ? "" : String(p).replace(".", ",")}</PriceTick>
            ))}
            <LastPrice>11,08</LastPrice>
          </PriceAxis>
        </ChartRow>
        <TimeAxis viewBox="734 0 1183 20">
          <path d="M734 .5H1881" stroke="#3a3a42" />
          {dates.map(([i, label]) => {
            const month = label.length > 2;
            return (
              <g key={i}>
                <path d={`M${Math.floor(candleX(i)) + 0.5} 1v3`} stroke="#505060" />
                <text
                  x={candleX(i)}
                  y="16"
                  textAnchor="middle"
                  fontSize={month ? 13 : 12}
                  fontWeight={month ? "bold" : "normal"}
                  fill={month ? "#00c4d0" : teal}
                >
                  {label}
                </text>
              </g>
            );
          })}
        </TimeAxis>
        <Footer>
          <Track><Thumb><Grip /></Thumb></Track>
          <NextButton aria-label="Avanti">
            <svg width="5" height="8" viewBox="0 0 5 8"><path d="M0 0l5 4-5 4z" fill="#e0e0e0" /></svg>
          </NextButton>
          <Zooms>
            <PlainButton aria-label="Proprietà grafico"><ChartToolIcon /></PlainButton>
            <PlainButton aria-label="Adatta">
              <Lens fill="#6c7888">
                <path d="M0 18.500h9M2 16.500l-2 2 2 2M7 16.500l2 2-2 2M18.500 1v12M16.500 3l2-2 2 2M16.500 11l2 2 2-2" fill="none" stroke="#28a8e0" strokeWidth="1.500" />
              </Lens>
            </PlainButton>
            <PlainButton aria-label="Zoom indietro">
              <Lens><path d="M5 7.500h6" stroke="#28b0f0" strokeWidth="2" /></Lens>
            </PlainButton>
            <PlainButton aria-label="Zoom avanti">
              <Lens><path d="M5 7.500h6M8 4.500v6" stroke="#28b0f0" strokeWidth="2" /></Lens>
            </PlainButton>
          </Zooms>
        </Footer>
      </Workspace>

      <PropertiesDialog />
    </Window>
  );
}
